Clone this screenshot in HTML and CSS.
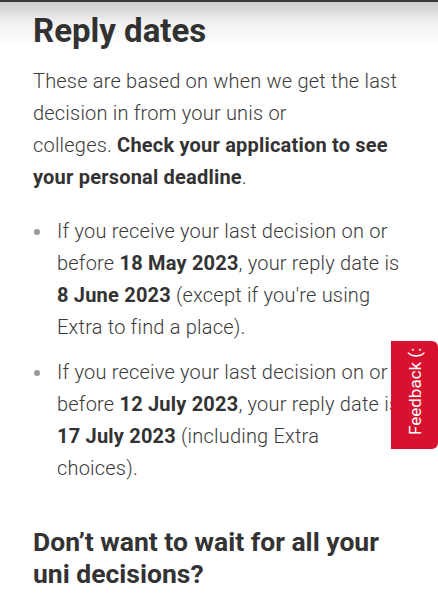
FILE: index.html
```html
<!DOCTYPE html>
<html lang="en">
<head>
<meta charset="utf-8">
<link rel="stylesheet" href="styles.css">
</head>
<body>
<div class="topbar"></div>
<main class="content">
  <h2 class="title">Reply dates</h2>
  <p class="lead">These are based on when we get the last decision in from your unis or<br>colleges. <strong>Check your application to see your personal deadline</strong>.</p>
  <ul class="dates">
    <li>If you receive your last decision on or before <strong>18 May 2023</strong>, your reply date is <strong>8 June 2023</strong> (except if you're using Extra to find a place).</li>
    <li>If you receive your last decision on or before <strong>12 July 2023</strong>, your reply date is <strong>17 July 2023</strong> (including Extra choices).</li>
  </ul>
  <h3 class="subtitle">Don’t want to wait for all your uni decisions?</h3>
</main>
<a class="feedback" href="#">Feedback (:</a>
</body>
</html>
```
FILE: styles.css
```css
html, body {
  margin: 0;
  padding: 0;
  background: #ffffff;
}
body {
  font-family: Roboto, "Liberation Sans", sans-serif;
  color: #3a3a3a;
  width: 438px;
  height: 600px;
  overflow: hidden;
  position: relative;
}
.topbar {
  position: absolute;
  top: 0;
  left: 0;
  right: 0;
  height: 44px;
  border-top: 2px solid #3a3a3a;
  background: linear-gradient(to bottom, rgba(0,0,0,0.2), rgba(0,0,0,0.06) 45%, rgba(0,0,0,0));
  pointer-events: none;
}
.content {
  padding: 0 37.5px 0 33px;
}
.title {
  margin: 0;
  padding-top: 10px;
  font-size: 33px;
  line-height: 42px;
  font-weight: 700;
  color: #333333;
}
.lead {
  margin: 13px 0 0;
  font-size: 20px;
  letter-spacing: 0.2px;
  line-height: 32px;
  font-weight: 300;
}
.lead strong, .dates strong {
  font-weight: 700;
  color: #333333;
}
.dates {
  list-style: none;
  margin: 22px 0 0;
  padding: 0;
}
.dates li {
  position: relative;
  padding-left: 24px;
  font-size: 20px;
  letter-spacing: 0.2px;
  line-height: 32px;
  font-weight: 300;
  margin-bottom: 13px;
}
.dates li::before {
  content: "";
  position: absolute;
  left: 1px;
  top: 14px;
  width: 6px;
  height: 6px;
  border-radius: 50%;
  background: #9a9a9a;
}
.subtitle {
  margin: 42px 0 0;
  font-size: 26.5px;
  line-height: 32px;
  font-weight: 700;
  color: #333333;
}
.feedback {
  position: absolute;
  left: 391px;
  top: 341px;
  width: 47px;
  height: 108px;
  box-sizing: border-box;
  padding-top: 8px;
  background: #d8112f;
  border-radius: 6px 0 0 6px;
  color: #ffffff;
  text-decoration: none;
  font-size: 17px;
  font-weight: 400;
  writing-mode: vertical-rl;
  transform: rotate(180deg);
  display: flex;
  align-items: center;
  justify-content: center;
}
```
